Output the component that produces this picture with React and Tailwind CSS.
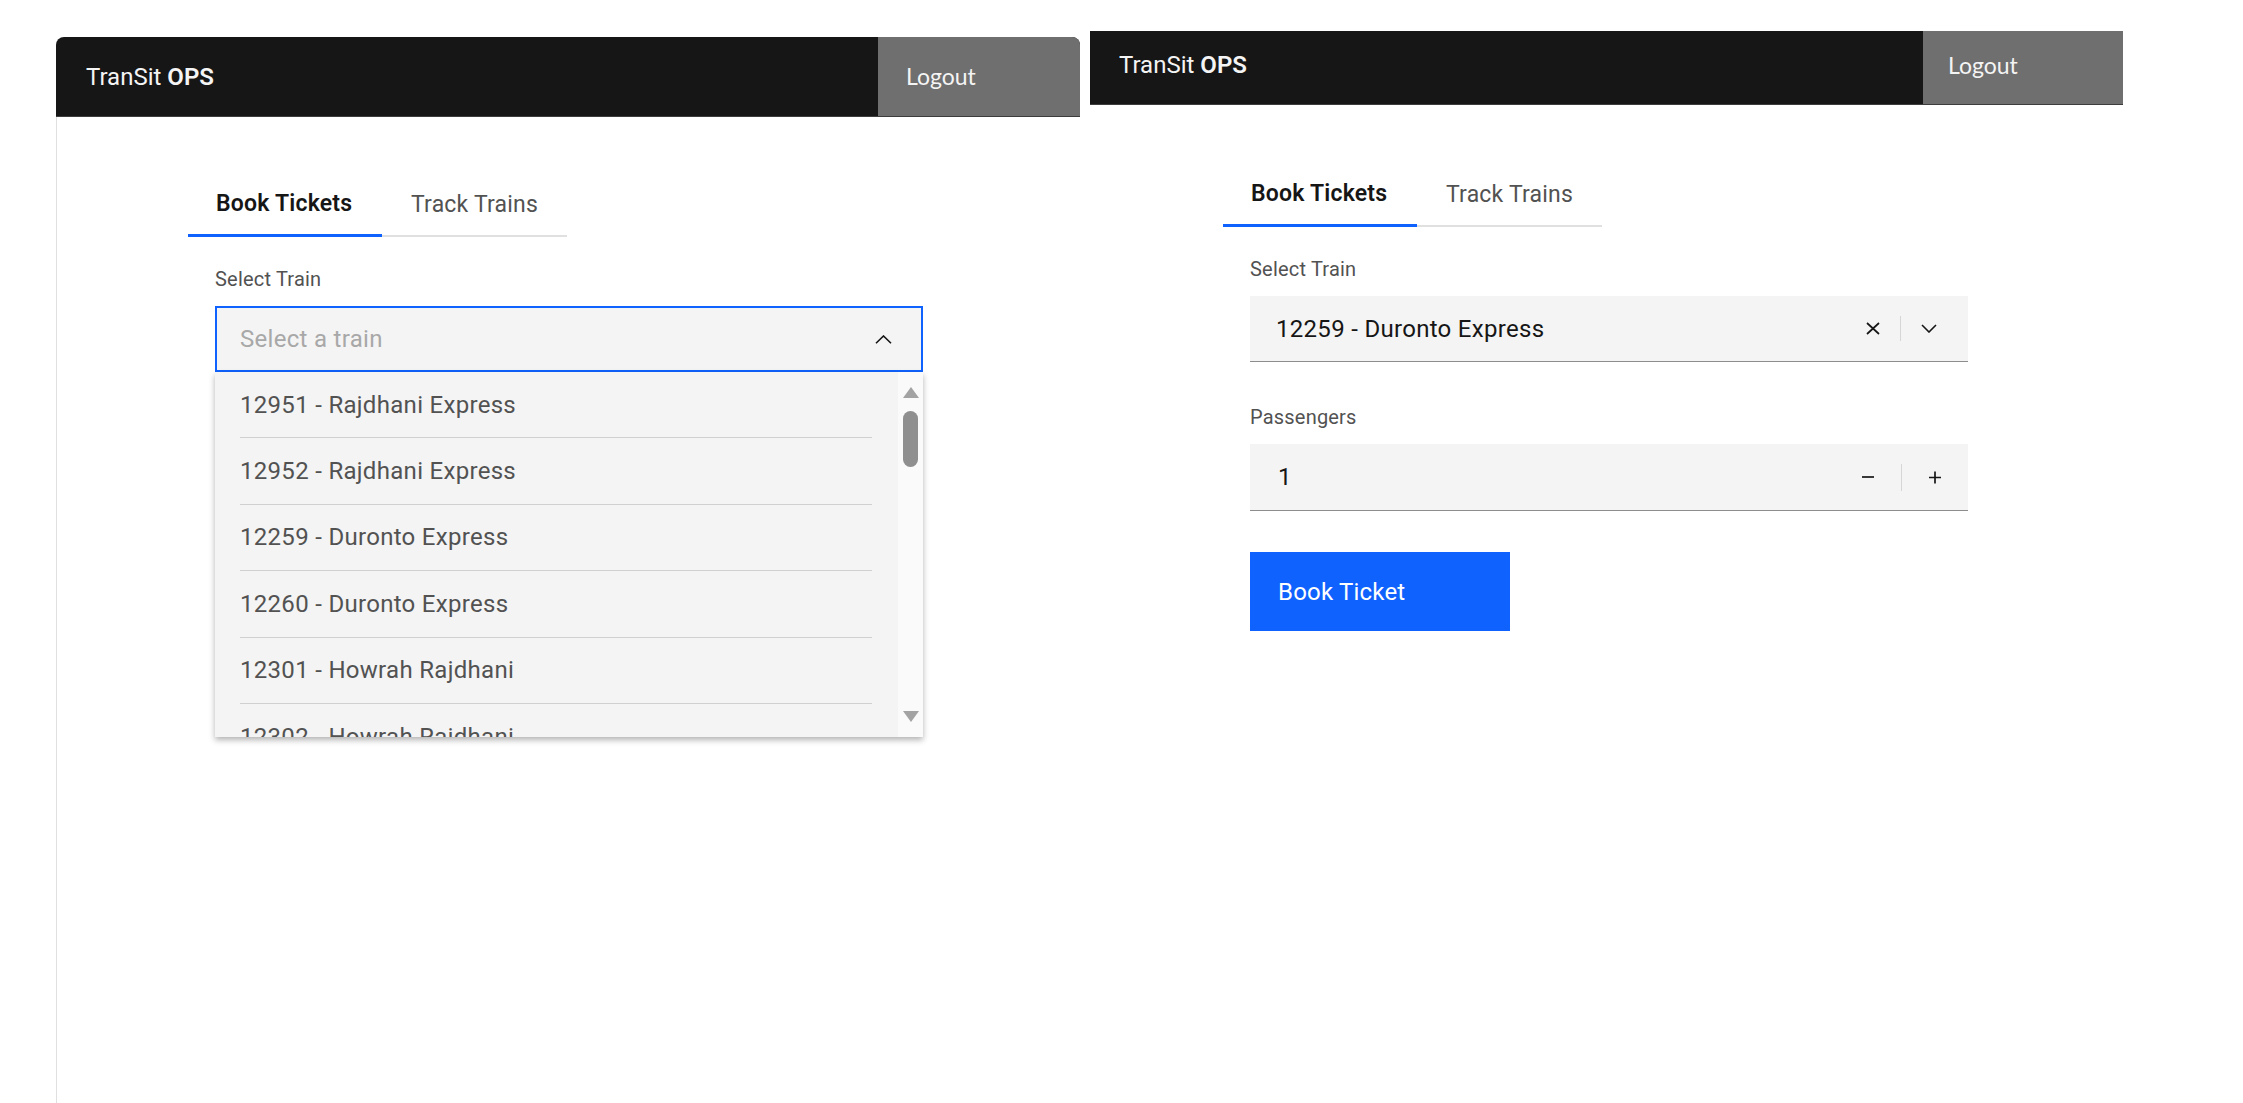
import React from "react";

const TRAINS = [
  "12951 - Rajdhani Express",
  "12952 - Rajdhani Express",
  "12259 - Duronto Express",
  "12260 - Duronto Express",
  "12301 - Howrah Rajdhani",
  "12302 - Howrah Rajdhani",
];

function ChevronUp() {
  return (
    <svg width="17" height="9" viewBox="0 0 17 9" className="ml-auto">
      <path d="M1 8.3 L8.5 1 L16 8.3" fill="none" stroke="#161616" strokeWidth="1.6" />
    </svg>
  );
}

function ChevronDown() {
  return (
    <svg width="16" height="9" viewBox="0 0 16 9">
      <path d="M1 1 L8 8 L15 1" fill="none" stroke="#161616" strokeWidth="1.6" />
    </svg>
  );
}

function CloseIcon() {
  return (
    <svg width="14" height="13" viewBox="0 0 14 13">
      <path d="M1 1 L13 12 M13 1 L1 12" fill="none" stroke="#161616" strokeWidth="1.7" />
    </svg>
  );
}

function MinusIcon() {
  return (
    <svg width="14" height="12" viewBox="0 0 14 12">
      <path d="M1 6 L13 6" fill="none" stroke="#161616" strokeWidth="1.7" />
    </svg>
  );
}

function PlusIcon() {
  return (
    <svg width="14" height="13" viewBox="0 0 14 13">
      <path d="M1 6.5 L13 6.5 M7 0.5 L7 12.5" fill="none" stroke="#161616" strokeWidth="1.7" />
    </svg>
  );
}

function Header({ height, rounded, logoPad, logoutW, logoutPad, lift }) {
  return (
    <header
      className={`${height} ${rounded ? "rounded-t-[8px]" : ""} overflow-hidden bg-[#161616] border-b border-[#3d3d3d] flex`}
    >
      <div className={`${logoPad} ${lift} flex items-center text-[24px] text-[#f4f4f4]`}>
        TranSit <span className="font-semibold ml-[6px]">OPS</span>
      </div>
      <button
        className={`ml-auto ${logoutW} ${logoutPad} ${lift} bg-[#6f6f6f] flex items-center text-[23px] text-[#f4f4f4] font-[Lato,sans-serif]`}
      >
        Logout
      </button>
    </header>
  );
}

function Tabs() {
  return (
    <div className="flex items-end h-[62px]">
      <div className="w-[194px] h-[62px] pl-[28px] flex items-center border-b-[3px] border-[#0f62fe] text-[23px] tracking-[0.2px] font-semibold text-[#161616]">
        Book Tickets
      </div>
      <div className="w-[185px] h-[62px] pl-[29px] flex items-center border-b-2 border-[#e0e0e0] text-[23px] tracking-[0.2px] text-[#525252]">
        Track Trains
      </div>
    </div>
  );
}

function Label({ children, className = "" }) {
  return <p className={`text-[20px] leading-[24px] tracking-[0.2px] text-[#525252] ${className}`}>{children}</p>;
}

function OpenSelect() {
  return (
    <div className="w-[708px] mt-[15px]">
      <div className="h-[66px] border-2 border-[#0f62fe] bg-[#f4f4f4] flex items-center pl-[23px] pr-[29px]">
        <span className="text-[24px] tracking-[0.3px] text-[#a8a8a8]">Select a train</span>
        <ChevronUp />
      </div>
      <div className="h-[365px] flex bg-[#f4f4f4] shadow-[0_3px_6px_rgba(0,0,0,0.3)] overflow-hidden">
        <ul className="flex-1">
          {TRAINS.map((t) => (
            <li key={t} className="h-[66.4px] ml-[25px] mr-[26px] border-b border-[#d0d0d0] flex items-center text-[24px] tracking-[0.3px] text-[#525252]">
              {t}
            </li>
          ))}
        </ul>
        {/* scrollbar */}
        <div className="w-[25px] bg-[#fafafa] flex flex-col items-center py-[15px]">
          <svg width="16" height="11" viewBox="0 0 16 11">
            <path d="M8 0 L16 11 L0 11 Z" fill="#a3a3a3" />
          </svg>
          <div className="mt-[13px] w-[15px] h-[56px] rounded-full bg-[#8f8f8f]" />
          <div className="flex-1" />
          <svg width="16" height="11" viewBox="0 0 16 11">
            <path d="M0 0 L16 0 L8 11 Z" fill="#a3a3a3" />
          </svg>
        </div>
      </div>
    </div>
  );
}

function LeftPanel() {
  return (
    <div className="w-[1024px] h-[1066px] mt-[37px] flex flex-col">
      <Header height="h-[80px]" rounded logoPad="pl-[30px]" logoutW="w-[202px]" logoutPad="pl-[28px]" lift="" />
      <div className="flex-1 border-l border-[#e0e0e0] pl-[131px] pt-[58px]">
        <Tabs />
        <div className="pl-[27px] mt-[30px]">
          <Label>Select Train</Label>
          <OpenSelect />
        </div>
      </div>
    </div>
  );
}

function RightPanel() {
  return (
    <div className="w-[1033px] ml-[10px] mt-[31px] flex flex-col">
      <Header height="h-[74px]" logoPad="pl-[29px]" logoutW="w-[200px]" logoutPad="pl-[25px]" lift="pb-[5px]" />
      <div className="pl-[133px] pt-[60px]">
        <Tabs />
        <div className="pl-[27px] mt-[30px]">
          <Label>Select Train</Label>
          <div className="mt-[15px] w-[718px] h-[66px] bg-[#f4f4f4] border-b border-[#8d8d8d] flex items-center pl-[26px] pr-[31px]">
            <span className="text-[24px] tracking-[0.3px] text-[#161616]">12259 - Duronto Express</span>
            <div className="ml-auto flex items-center gap-[20px]">
              <CloseIcon />
              <div className="w-px h-[25px] bg-[#d6d6d6]" />
              <ChevronDown />
            </div>
          </div>

          <Label className="mt-[43px]">Passengers</Label>
          <div className="mt-[15px] w-[718px] h-[67px] bg-[#f4f4f4] border-b border-[#8d8d8d] flex items-center pl-[28px] pr-[26px]">
            <span className="text-[24px] text-[#161616]">1</span>
            <div className="ml-auto flex items-center gap-[26px]">
              <MinusIcon />
              <div className="w-px h-[27px] bg-[#d6d6d6]" />
              <PlusIcon />
            </div>
          </div>

          <button className="mt-[41px] w-[260px] h-[79px] bg-[#0f62fe] text-white text-[24px] tracking-[0.2px] pl-[28px] flex items-center">
            Book Ticket
          </button>
        </div>
      </div>
    </div>
  );
}

export default function App() {
  return (
    <div className="w-[2243px] h-[1103px] overflow-hidden bg-white flex items-start pl-[56px] font-[Roboto,sans-serif]">
      <LeftPanel />
      <RightPanel />
    </div>
  );
}
